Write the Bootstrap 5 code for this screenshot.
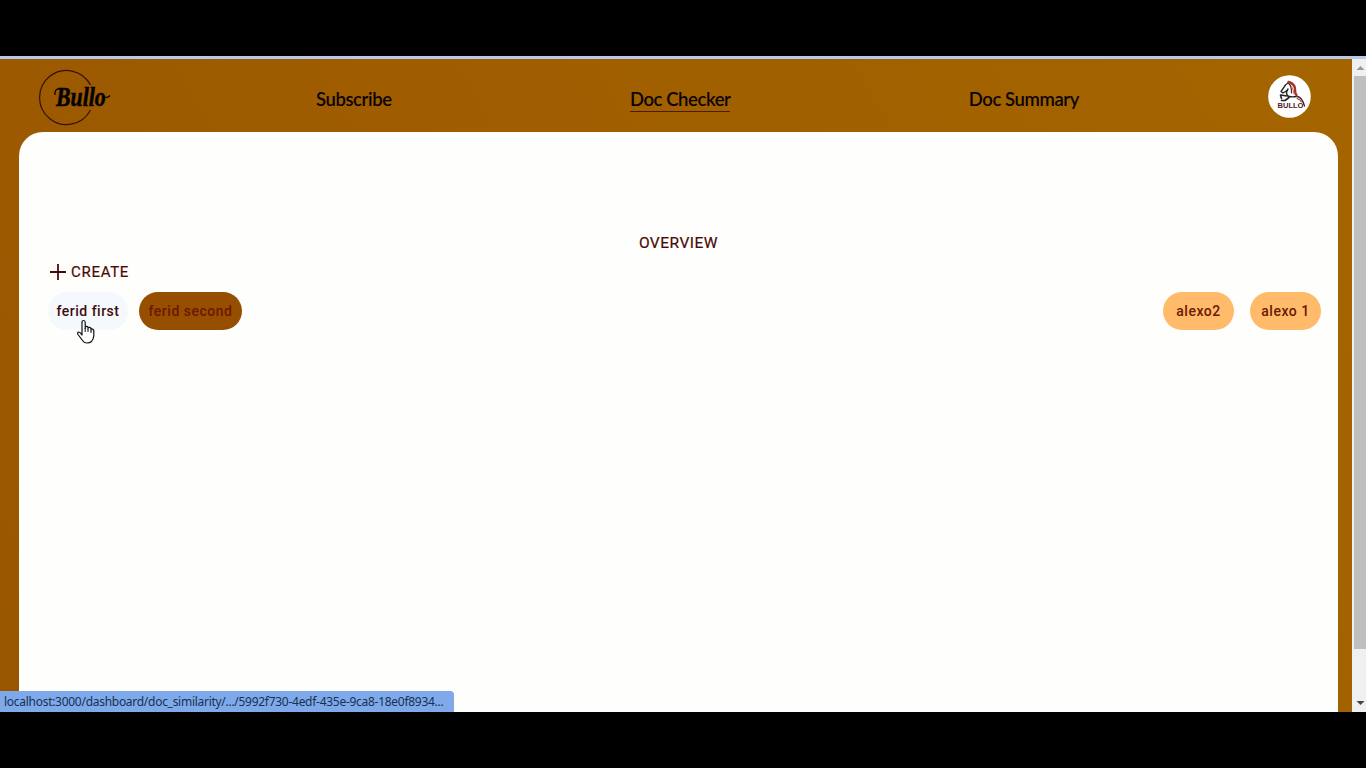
<!DOCTYPE html>
<html lang="en">
<head>
<meta charset="utf-8">
<meta name="viewport" content="width=device-width, initial-scale=1">
<title>Bullo</title>
<link href="https://cdn.jsdelivr.net/npm/bootstrap@5.3.0/dist/css/bootstrap.min.css" rel="stylesheet">
<style>
body{background:#000;font-family:Roboto,sans-serif;color:#4a0a04}
.screen{height:768px;padding:56px 0}
.strip{height:3px;background:#b9c9ee;flex:none}
.page{background:linear-gradient(60deg,#995600,#a05e00 50%,#a46500)}
.topbar{height:73px;padding:2px 41px 0 38px}
.links{width:763px;margin-left:204px;margin-right:189px}
.links a{font:600 18.5px/24px Lato,sans-serif;color:#0b0405;letter-spacing:-.42px;margin-top:5px;border-bottom:1px solid transparent;text-decoration:none;white-space:nowrap}
.links a.active{border-color:#4a1d05}
.panel{margin:0 14px 0 19px;border-radius:24px 24px 0 0;background:#fefefd;padding:101px 17px 0 29px}
.overview{font:400 15.5px/20px Roboto,sans-serif;-webkit-text-stroke:.2px;letter-spacing:.5px;margin-left:-12px}
.create{font:400 15px/20px Roboto,sans-serif;-webkit-text-stroke:.2px;letter-spacing:.7px;color:#4a0a04;padding:0;margin-top:9px;margin-left:2px;gap:5px}
.pill{height:38px;border-radius:19px;font:500 14px/38px Roboto,sans-serif;letter-spacing:.5px;text-align:center;text-decoration:none;color:#691904;white-space:nowrap}
.pill-hover{background:#f5f8fd;color:#3c0d0c;width:80px}
.pill-dark{background:#964f00;color:#6e1600;width:103px}
.pill-light{background:#ffbb6a;width:71px}
.pill-row{margin-top:10px}
.cursor{left:28px;top:27px}
.status{left:0;bottom:0;width:454px;height:21px;background:#7eaaec;border-top-right-radius:4px;border:1px solid #83a8df;border-left:0;border-bottom:0;font:12px/20px "Noto Sans",sans-serif;letter-spacing:-.28px;color:#19304f;padding-left:4px;white-space:nowrap}
.scroll{width:14px;background:#f0f0f0;flex:none}
.thumb{height:573px;width:12px;background:#bfbfbe;margin-left:2px}
</style>
</head>
<body>
<div class="screen d-flex flex-column overflow-hidden">
  <div class="strip"></div>
  <div class="d-flex flex-grow-1 position-relative">
    <main class="page flex-grow-1 d-flex flex-column">
      <nav class="topbar d-flex align-items-center">
        <a href="#" class="d-flex flex-none" aria-label="Bullo"><svg width="74" height="60" viewBox="0 0 74 60">
          <path d="M53 17A27 27 0 1 0 53 42" transform="translate(-.5 1)" fill="none" stroke="#35100b" stroke-width="1.2"/>
          <text transform="translate(18 39) scale(.92 1.15)" font-family="Liberation Serif,serif" font-size="23" font-weight="700" font-style="italic" textLength="54" lengthAdjust="spacingAndGlyphs" fill="#050203" stroke="#050203" stroke-width=".5">Bullo</text>
          <path d="M17 28Q16 22 22 21.500M67 30q3 1 5-1.500" fill="none" stroke="#050203" stroke-width="1.3"/>
        </svg></a>
        <div class="links d-flex justify-content-between">
          <a href="#">Subscribe</a><a href="#" class="active">Doc Checker</a><a href="#">Doc Summary</a>
        </div>
        <svg width="43" height="43" viewBox="0 0 43 43" class="flex-shrink-0">
          <circle cx="21.5" cy="21.5" r="21.3" fill="#fff"/>
          <g fill="none" stroke-linecap="round" stroke-linejoin="round">
            <path d="M20.500 7.500Q16.500 10 15.500 13L13 16.500L15 18L19 15.500" stroke="#222" stroke-width="1.300"/>
            <path d="M20 14Q17 18 20 21Q24 22.500 28 21.500" stroke="#222" stroke-width="1.400"/>
            <path d="M19 21L12.500 20L13.500 23.500M21 22.500L17 25.500H13.500" stroke="#222" stroke-width="1.600"/>
            <path d="M20.500 8Q24 12 23.500 18" stroke="#333" stroke-width="1.200"/>
            <path d="M20.500 7Q27 9 27 14T28.500 20" stroke="#a83029" stroke-width="2.400"/>
            <path d="M23.500 11Q25.500 15 26 19" stroke="#d46a5c" stroke-width="1"/>
            <path d="M29 21.500Q34 22 36.500 31" stroke="#511d1c" stroke-width="1.300"/>
            <path d="M29 23.500Q32 24 33.500 27" stroke="#711d1c" stroke-width="1"/>
          </g>
          <text x="9.500" y="33" font-family="Liberation Sans,sans-serif" font-size="6.800" font-weight="700" textLength="26" lengthAdjust="spacingAndGlyphs" fill="#4c2424">BULLO</text>
        </svg>
      </nav>
      <section class="panel flex-grow-1">
        <div class="overview text-center">OVERVIEW</div>
        <button class="create btn border-0 d-flex align-items-center"><svg width="16" height="16" viewBox="0 0 16 16"><path d="M0 8H16M8 0V16" stroke="#4a0a04" stroke-width="1.800"/></svg>CREATE</button>
        <div class="pill-row d-flex justify-content-between">
          <div class="d-flex">
            <div class="position-relative"><a href="#" class="pill pill-hover d-block">ferid first</a>
              <svg class="cursor position-absolute" width="20" height="26" viewBox="0 0 20 26"><path d="M6 15V3.500Q6 1.500 7.600 1.500T9.200 3.500V9.500V8Q10.800 6.500 12 8.200V10V8.700Q13.800 7.700 15 9.300V11V10Q17.500 9.500 17.800 12V17Q17.500 20 15.500 22.500Q14 24 11 24Q8 24 6.500 21.500L2 15.500Q1 13.500 2.500 13Q4 12.800 6 16Z" fill="#fff" stroke="#111" stroke-width="1.200" stroke-linejoin="round"/><path d="M9.200 9V13M12 10V13M15 11V14" stroke="#111" stroke-width="1"/></svg>
            </div>
            <a href="#" class="pill pill-dark" style="margin-left:11px">ferid second</a>
          </div>
          <div class="d-flex gap-3"><a href="#" class="pill pill-light">alexo2</a><a href="#" class="pill pill-light">alexo 1</a></div>
        </div>
      </section>
    </main>
    <div class="scroll d-flex flex-column">
      <svg width="14" height="17" viewBox="0 0 14 17"><path d="M4.500 11L8.500 7L12.500 11Z" fill="#999"/></svg>
      <div class="thumb"></div>
      <svg class="mt-auto" width="14" height="17" viewBox="0 0 14 17"><path d="M4.500 6L8.500 10L12.500 6Z" fill="#444"/></svg>
    </div>
    <div class="status position-absolute">localhost:3000/dashboard/doc_similarity/.../5992f730-4edf-435e-9ca8-18e0f8934...</div>
  </div>
</div>
<script src="https://cdn.jsdelivr.net/npm/bootstrap@5.3.0/dist/js/bootstrap.bundle.min.js"></script>
</body>
</html>
